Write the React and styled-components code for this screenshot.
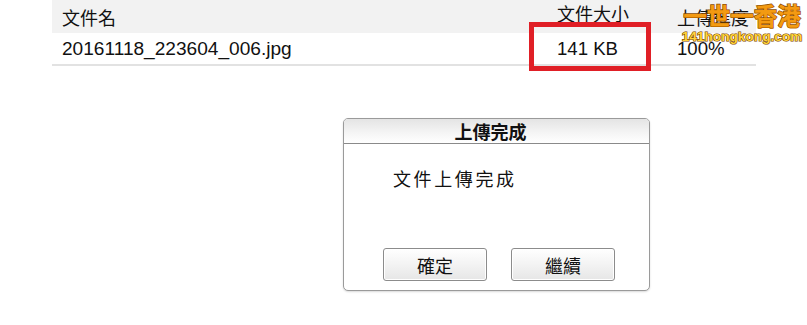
import React from "react";
import styled, { createGlobalStyle } from "styled-components";

const GlobalStyle = createGlobalStyle`
  html, body {
    margin: 0;
    padding: 0;
    background: #ffffff;
  }
  body {
    font-family: "Liberation Sans", "Noto Sans CJK TC", Arial, sans-serif;
    color: #111111;
  }
`;

const files = [{ name: "20161118_223604_006.jpg", size: "141 KB", progress: "100%" }];

export default function App() {
  return (
    <>
      <GlobalStyle />
      <Page>
        <FileTable>
          <HeaderRow>
            <Cell>文件名</Cell>
            <Cell lift>文件大小</Cell>
            <Cell>上傳進度</Cell>
          </HeaderRow>
          {files.map((f) => (
            <BodyRow key={f.name}>
              <Cell wide>{f.name}</Cell>
              <Cell>{f.size}</Cell>
              <Cell>{f.progress}</Cell>
            </BodyRow>
          ))}
          <Highlight />
        </FileTable>

        <Dialog>
          <DialogTitle>上傳完成</DialogTitle>
          <DialogBody>
            <Message>文件上傳完成</Message>
            <ButtonRow>
              <DialogButton>確定</DialogButton>
              <DialogButton>繼續</DialogButton>
            </ButtonRow>
          </DialogBody>
        </Dialog>

        <Watermark>
          <LogoMain>一世一香港</LogoMain>
          <LogoSub>141hongkong.com</LogoSub>
        </Watermark>
      </Page>
    </>
  );
}

const Page = styled.div`
  position: relative;
  width: 807px;
  height: 325px;
  overflow: hidden;
`;

const FileTable = styled.div`
  position: relative;
  margin-left: 52px;
  width: 704px;
`;

const HeaderRow = styled.div`
  display: grid;
  grid-template-columns: 495px 120px 1fr;
  height: 33px;
  align-items: center;
  background: #f2f2f2;
  font-size: 18px;
`;

const BodyRow = styled.div`
  display: grid;
  grid-template-columns: 495px 120px 1fr;
  height: 31px;
  align-items: center;
  border-bottom: 2px solid #e2e2e2;
  font-size: 18.6px;
`;

const Cell = styled.div`
  padding-left: 10px;
  white-space: nowrap;
  margin-top: ${(p) => (p.lift ? "-8px" : "0")};
  font-size: ${(p) => (p.wide ? "19.1px" : "inherit")};
`;

const Highlight = styled.div`
  position: absolute;
  left: 477px;
  top: 22px;
  width: 122px;
  height: 49px;
  box-sizing: border-box;
  border: 5px solid #e01f26;
`;

const Dialog = styled.div`
  margin: 52px 0 0 343px;
  width: 307px;
  height: 173px;
  box-sizing: border-box;
  border: 1px solid #9a9a9a;
  border-radius: 5px;
  box-shadow: 0 1px 2px rgba(0, 0, 0, 0.15);
  background: #ffffff;
  display: flex;
  flex-direction: column;
  overflow: hidden;
`;

const DialogTitle = styled.div`
  height: 24px;
  flex: none;
  display: flex;
  align-items: center;
  justify-content: center;
  border-bottom: 1px solid #8a8a8a;
  background: linear-gradient(#e4e4e4, #f4f4f4 55%, #ffffff);
  font-size: 18px;
  font-weight: bold;
  padding-right: 12px;
`;

const DialogBody = styled.div`
  flex: 1;
  display: flex;
  flex-direction: column;
  padding: 24px 0 9px 39px;
`;

const Message = styled.div`
  margin-left: 10px;
  font-size: 18px;
  letter-spacing: 2.6px;
  line-height: 24px;
`;

const ButtonRow = styled.div`
  margin-top: auto;
  display: flex;
  gap: 24px;
`;

const DialogButton = styled.button`
  width: 104px;
  height: 33px;
  border: 1px solid #8c8c8c;
  border-radius: 3px;
  background: linear-gradient(#ffffff, #f3f3f3 50%, #e6e6e6);
  box-shadow: inset 0 0 0 1px #ffffff;
  font-family: "Liberation Sans", "Noto Sans CJK TC", sans-serif;
  font-size: 18px;
  color: #111111;
  padding: 0;
`;

const Watermark = styled.div`
  position: absolute;
  left: 682px;
  top: 1px;
  display: flex;
  flex-direction: column;
  align-items: center;
  width: 120px;
`;

const LogoMain = styled.div`
  font-family: "Noto Sans CJK TC", sans-serif;
  font-size: 23.5px;
  font-weight: bold;
  line-height: 29px;
  color: #f39a12;
  -webkit-text-stroke: 1.4px #8a4b00;
  paint-order: stroke fill;
  text-shadow: 0 1px 0 #c26f00;
`;

const LogoSub = styled.div`
  font-family: "Liberation Sans", Arial, sans-serif;
  font-size: 13.5px;
  font-weight: bold;
  line-height: 14px;
  letter-spacing: 0.1px;
  color: #ffd43a;
  -webkit-text-stroke: 1.2px #7a4300;
  paint-order: stroke fill;
`;
